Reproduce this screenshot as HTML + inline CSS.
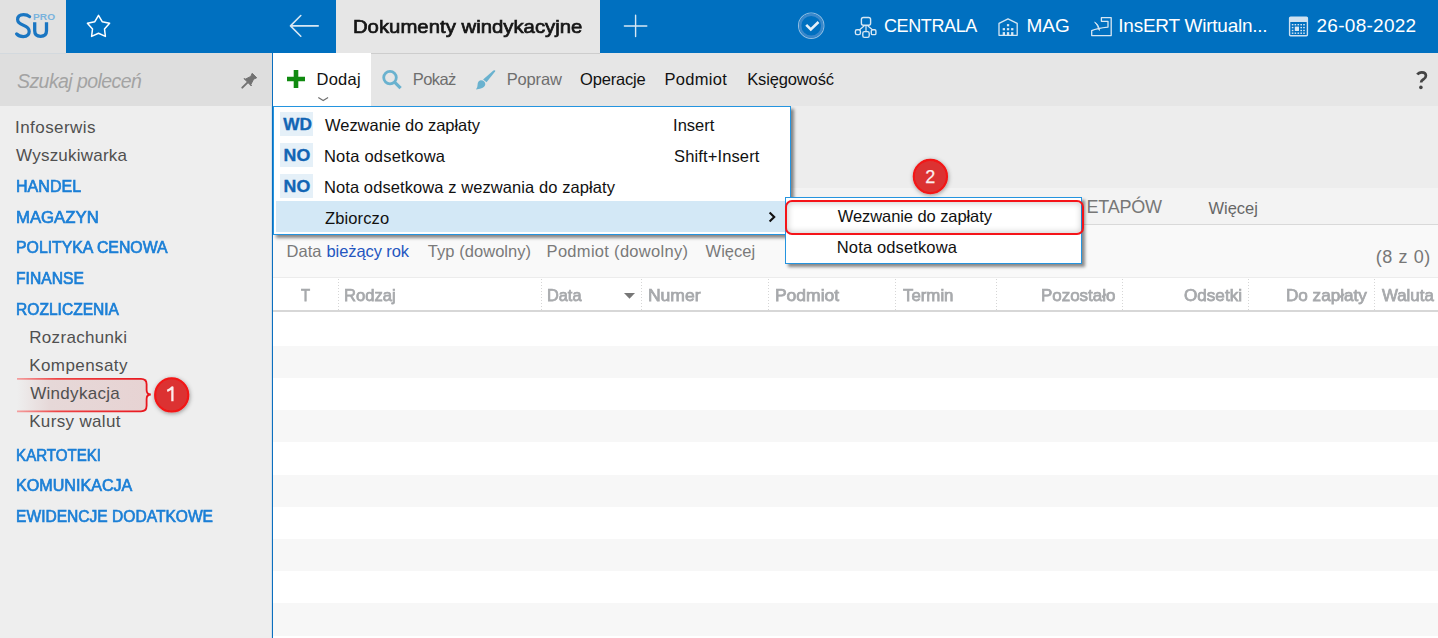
<!DOCTYPE html>
<html><head><meta charset="utf-8">
<style>
*{box-sizing:border-box;margin:0;padding:0}
html,body{width:1438px;height:638px;overflow:hidden;background:#fff;font-family:"Liberation Sans",sans-serif;position:relative}
.a{position:absolute}
.t{position:absolute;white-space:pre;line-height:1}
svg{position:absolute;overflow:visible}
</style></head><body>
<!-- ===== TOP BAR ===== -->
<div class="a" style="left:0;top:0;width:66px;height:53px;background:#e1e1e1"></div>
<div class="a" style="left:66px;top:0;width:270px;height:53px;background:#0070c0"></div>
<div class="a" style="left:336px;top:0;width:264px;height:53px;background:#e6e6e6"></div>
<div class="a" style="left:600px;top:0;width:838px;height:53px;background:#0070c0"></div>

<!-- logo -->
<svg style="left:0;top:0" width="66" height="53">
  <path d="M29.6 16.6 Q27.4 14.6 23.6 14.6 Q17.6 14.6 17.6 19.6 Q17.6 23.3 23.4 25.3 Q29.2 27.3 29.2 31.6 Q29.2 36.6 23.2 36.6 Q19 36.6 16.6 33.9" fill="none" stroke="#1a76c2" stroke-width="3.2" stroke-linecap="round"/>
  <path d="M34.7 22.2 V30.8 Q34.7 36.3 40.6 36.3 Q46.5 36.3 46.5 30.8 V22.2" fill="none" stroke="#1a76c2" stroke-width="3.3"/>
  <text x="33.1" y="19.8" font-family="Liberation Sans" font-size="9.4" font-weight="700" fill="#7ab3dd" textLength="22" lengthAdjust="spacingAndGlyphs">PRO</text>
</svg>

<!-- star -->
<svg style="left:0;top:0" width="140" height="53">
  <path d="M98.5 15.3 L102.2 21.7 L109.6 23.3 L104.5 29 L105.4 36.4 L98.5 33.3 L91.6 36.4 L92.5 29 L87.4 23.3 L94.8 21.7 Z" fill="none" stroke="#fff" stroke-width="1.5" stroke-linejoin="round"/>
</svg>
<!-- back arrow -->
<svg style="left:0;top:0" width="336" height="53">
  <path d="M300.8 15.5 L290.5 25.9 L300.8 36.2 M290.5 25.9 H318.2" fill="none" stroke="#d7e7f3" stroke-width="1.6" stroke-linecap="round" stroke-linejoin="round"/>
</svg>
<!-- plus -->
<svg style="left:0;top:0" width="700" height="53">
  <path d="M635.6 15.2 V36.6 M624.4 26 H646.8" fill="none" stroke="#d7e7f3" stroke-width="1.4" stroke-linecap="round"/>
</svg>
<!-- status check -->
<svg style="left:0;top:0" width="900" height="53">
  <circle cx="811.2" cy="25.7" r="12.7" fill="none" stroke="#8fbde2" stroke-width="1.1"/>
  <circle cx="811.2" cy="25.7" r="11" fill="none" stroke="#3a88cb" stroke-width="2.4"/>
  <path d="M806.2 24.8 L810.8 29.4 L818.5 22" fill="none" stroke="#e4eff8" stroke-width="2.6"/>
  <!-- org icon -->
  <rect x="861.4" y="17.5" width="9.2" height="7.8" rx="2" fill="none" stroke="#d7e7f3" stroke-width="1.4"/>
  <path d="M866 25.3 V31.2 M864.3 25.8 L859.3 30 M867.7 25.8 L872.7 30" fill="none" stroke="#d7e7f3" stroke-width="1.2"/>
  <rect x="862.8" y="31.6" width="6.4" height="5.8" rx="1.6" fill="none" stroke="#d7e7f3" stroke-width="1.4"/>
  <rect x="855.4" y="29.8" width="5" height="4.8" rx="1.6" fill="none" stroke="#d7e7f3" stroke-width="1.4"/>
  <rect x="871.3" y="29.8" width="4.6" height="4.8" rx="1.2" fill="none" stroke="#d7e7f3" stroke-width="1.4"/>
</svg>
<!-- building icon -->
<svg style="left:0;top:0" width="1100" height="53">
  <path d="M999 35.3 V23.4 L1008 18.8 L1017.2 23.4 V35.3 Z" fill="none" stroke="#d7e7f3" stroke-width="1.3" stroke-linejoin="round"/>
  <g fill="#d7e7f3">
    <rect x="1006.9" y="24.1" width="2.3" height="2.2"/>
    <rect x="1002.7" y="28.1" width="2.3" height="2.2"/><rect x="1006.9" y="28.1" width="2.3" height="2.2"/><rect x="1011.1" y="28.1" width="2.3" height="2.2"/>
    <rect x="1002.7" y="32.1" width="2.3" height="3"/><rect x="1006.9" y="32.1" width="2.3" height="3"/><rect x="1011.1" y="32.1" width="2.3" height="3"/>
  </g>
  <!-- insert icon -->
  <path d="M1101.4 21.3 V17.7 H1111.2 V35.6 H1091.7 V30.6 Q1097 28.2 1108 27.1 V21.3 Z" fill="none" stroke="#d7e7f3" stroke-width="1.3" stroke-linejoin="round"/>
  <path d="M1094.6 22.3 Q1098.6 23.6 1099.4 30.4 Q1098 27.8 1097.6 26.2 Q1096.4 23.6 1094.6 22.3 Z" fill="#d7e7f3" stroke="#d7e7f3" stroke-width="0.9" stroke-linejoin="round"/>
</svg>
<!-- calendar icon -->
<svg style="left:0;top:0" width="1438" height="53">
  <rect x="1289.6" y="17.2" width="17.8" height="18.6" rx="1" fill="none" stroke="#cfe2f1" stroke-width="1.4"/>
  <rect x="1289.6" y="17.2" width="17.8" height="4.8" fill="#cfe2f1"/>
  <g fill="#d7e7f3">
    <rect x="1291.8" y="24" width="1.6" height="1.4"/><rect x="1294.6" y="24" width="1.6" height="1.4"/><rect x="1297.5" y="24" width="1.6" height="1.4"/><rect x="1300.4" y="24" width="1.6" height="1.4"/><rect x="1303.2" y="24" width="1.6" height="1.4"/>
    <rect x="1291.8" y="26.9" width="1.6" height="1.4"/><rect x="1300.4" y="26.9" width="1.6" height="1.4"/><rect x="1303.2" y="26.9" width="1.6" height="1.4"/>
    <rect x="1291.8" y="29.8" width="1.6" height="1.4"/><rect x="1300.4" y="29.8" width="1.6" height="1.4"/><rect x="1303.2" y="29.8" width="1.6" height="1.4"/>
    <rect x="1291.8" y="32.5" width="1.6" height="1.4"/><rect x="1294.6" y="32.5" width="1.6" height="1.4"/><rect x="1297.5" y="32.5" width="1.6" height="1.4"/><rect x="1300.4" y="32.5" width="1.6" height="1.4"/><rect x="1303.2" y="32.5" width="1.6" height="1.4"/>
    <rect x="1294.8" y="26.6" width="4.2" height="4.4"/>
  </g>
</svg>

<!-- ===== SECOND ROW ===== -->
<div class="a" style="left:0;top:53px;width:272px;height:53px;background:#dedede"></div>
<div class="a" style="left:0;top:53px;width:66px;height:1px;background:#d3d9de"></div>
<div class="a" style="left:273px;top:53px;width:1165px;height:53px;background:#e6e6e6"></div>
<div class="a" style="left:336px;top:53px;width:264px;height:1px;background:#cdcdcd"></div>
<div class="a" style="left:273px;top:53px;width:98px;height:53px;background:#fff"></div>
<!-- pin -->
<svg style="left:0;top:0" width="272" height="105">
  <path d="M252.2 73.3 L256.7 77.8 L253.6 79.2 L250.9 84.4 L251.4 86 L244 78.6 L245.6 79.1 L250.8 76.4 Z" fill="#727272" stroke="#727272" stroke-width="1" stroke-linejoin="round"/>
  <path d="M247.4 82.6 L242.3 87.6" stroke="#727272" stroke-width="2" stroke-linecap="round"/>
</svg>
<!-- toolbar icons -->
<svg style="left:0;top:0" width="1438" height="105">
  <path d="M296 70 V88 M287 79 H305" stroke="#108a10" stroke-width="4.6"/>
  <path d="M318.3 97.6 L323.2 100.5 L328.1 97.6" fill="none" stroke="#707070" stroke-width="1.2"/>
  <circle cx="390" cy="77.6" r="6.3" fill="none" stroke="#6ab2cf" stroke-width="2.8"/>
  <path d="M394.8 82.4 L400.6 88.2" stroke="#6ab2cf" stroke-width="3.2" stroke-linecap="butt"/>
  <path d="M483.1 79.5 L493.4 70.6 Q495.8 69.4 495.1 71.6 L486.5 82.3 Z" fill="#6ab2cf"/>
  <path d="M480.8 80.2 Q485.3 80.5 485.3 84.3 Q485 87.7 480 88.7 L476 89.6 Q477.7 87.8 477.6 84.6 Q477.6 80.8 480.8 80.2 Z" fill="#6ab2cf"/>
  <path d="M1417.3 74.6 Q1418.8 72.3 1421.8 72.3 Q1425.9 72.3 1425.9 75.7 Q1425.9 77.9 1423.5 79.3 Q1421.1 80.6 1421.1 82.6" fill="none" stroke="#444" stroke-width="2.7" stroke-linecap="butt"/>
  <circle cx="1420.9" cy="87.4" r="1.8" fill="#444"/>
</svg>

<!-- ===== SIDEBAR ===== -->
<div class="a" style="left:0;top:106px;width:272px;height:532px;background:#eeeeee"></div>
<div class="a" style="left:271px;top:106px;width:1px;height:532px;background:#d3dfea"></div>
<div class="a" style="left:272px;top:53px;width:1px;height:585px;background:#0b6fbf"></div>

<!-- ===== MAIN ===== -->
<div class="a" style="left:273px;top:106px;width:1165px;height:82px;background:#ededed"></div>
<div class="a" style="left:273px;top:188px;width:1165px;height:37px;background:#f3f3f3;border-bottom:1px solid #d9d9d9"></div>
<div class="a" style="left:273px;top:225px;width:1165px;height:52px;background:#f9f9f9"></div>
<div class="a" style="left:273px;top:277px;width:1165px;height:35px;background:#fff;border-top:1px solid #ececec;border-bottom:2px solid #d7d7d7"></div>
<!-- col separators -->
<svg style="left:0;top:0" width="1438" height="320">
  <g stroke="#d6d6d6" stroke-width="1" stroke-dasharray="1 2">
    <path d="M338.5 279 V310 M541.5 279 V310 M641.5 279 V310 M768.5 279 V310 M895.5 279 V310 M996.5 279 V310 M1122.5 279 V310 M1248.5 279 V310 M1374.5 279 V310"/>
  </g>
  <path d="M624 293 H635 L629.5 298.8 Z" fill="#777"/>
</svg>
<!-- rows -->
<div class="a" style="left:273px;top:346px;width:1165px;height:32px;background:#f7f7f7"></div>
<div class="a" style="left:273px;top:410px;width:1165px;height:32px;background:#f7f7f7"></div>
<div class="a" style="left:273px;top:475px;width:1165px;height:32px;background:#f7f7f7"></div>
<div class="a" style="left:273px;top:539px;width:1165px;height:32px;background:#f7f7f7"></div>
<div class="a" style="left:273px;top:603px;width:1165px;height:33px;background:#f7f7f7"></div>

<!-- ===== ANNOTATION 1 ===== -->
<svg style="left:0;top:0" width="272" height="638">
  <defs>
    <linearGradient id="hl1" x1="0" x2="1" y1="0" y2="0">
      <stop offset="0" stop-color="#eeeeee"/>
      <stop offset="0.25" stop-color="#e6d8d8"/>
      <stop offset="1" stop-color="#e7d3d3"/>
    </linearGradient>
    <linearGradient id="ln1" x1="0" x2="1" y1="0" y2="0">
      <stop offset="0" stop-color="#f3a0a0"/>
      <stop offset="0.3" stop-color="#ee4444"/>
      <stop offset="1" stop-color="#e8141c"/>
    </linearGradient>
    <filter id="sh" x="-50%" y="-50%" width="200%" height="200%">
      <feDropShadow dx="0.5" dy="1.2" stdDeviation="2.2" flood-color="#000" flood-opacity="0.38"/>
    </filter>
  </defs>
  <rect x="17" y="379" width="130" height="32" fill="url(#hl1)"/>
  <path d="M17 378.8 H141 Q146.6 378.8 146.6 384.3 V390 Q146.6 394.5 150.8 394.5 Q146.6 394.5 146.6 399 V405.8 Q146.6 411.3 141 411.3 H17" fill="none" stroke="url(#ln1)" stroke-width="1.8"/>
  <g filter="url(#sh)">
    <circle cx="171.7" cy="394.9" r="16.6" fill="#dc3333" stroke="#f31414" stroke-width="2.1"/>
  </g>
  <path d="M172.4 401.2 V387.3 Q170.6 389.6 167.2 390.8" fill="none" stroke="#fbeeee" stroke-width="2.3" stroke-linejoin="round"/>
</svg>

<!-- ===== MENU ===== -->
<div class="a" style="left:273px;top:106px;width:518px;height:129px;background:#fff;border:1px solid #2494df;box-shadow:3px 3px 3px rgba(0,0,0,0.45)"></div>
<div class="a" style="left:276px;top:201px;width:510px;height:31px;background:#d3e8f6"></div>
<div class="a" style="left:280px;top:112px;width:33px;height:24px;background:#e5f0f8"></div>
<div class="a" style="left:280px;top:143px;width:33px;height:24px;background:#e5f0f8"></div>
<div class="a" style="left:280px;top:173.5px;width:33px;height:24px;background:#e5f0f8"></div>
<svg style="left:0;top:0" width="800" height="240">
  <text x="283.3" y="130.2" font-family="Liberation Sans" font-size="16" font-weight="700" fill="#1265b4" stroke="#1265b4" stroke-width="0.35" textLength="28.7" lengthAdjust="spacingAndGlyphs">WD</text>
  <text x="283.6" y="161" font-family="Liberation Sans" font-size="16" font-weight="700" fill="#1265b4" stroke="#1265b4" stroke-width="0.35" textLength="26.6" lengthAdjust="spacingAndGlyphs">NO</text>
  <text x="283.6" y="191.8" font-family="Liberation Sans" font-size="16" font-weight="700" fill="#1265b4" stroke="#1265b4" stroke-width="0.35" textLength="26.6" lengthAdjust="spacingAndGlyphs">NO</text>
  <path d="M769.6 212.6 L774.2 217 L769.6 221.4" fill="none" stroke="#111" stroke-width="2.1"/>
</svg>

<!-- ===== SUBMENU ===== -->
<div class="a" style="left:785px;top:197px;width:297px;height:67px;background:#fff;border:1px solid #2494df;box-shadow:3px 3px 3px rgba(0,0,0,0.45)"></div>
<div class="a" style="left:785px;top:199.5px;width:298.5px;height:35px;border:2px solid #f51419;border-radius:7px;box-shadow:inset 0 0 6px 1px rgba(0,0,0,0.2)"></div>

<!-- ===== BADGE 2 ===== -->
<svg style="left:0;top:0" width="1000" height="240">
  <g filter="url(#sh)">
    <circle cx="930.4" cy="176.5" r="16.6" fill="#dc3333" stroke="#f31414" stroke-width="2.1"/>
  </g>
  <text x="930.2" y="183" text-anchor="middle" font-family="Liberation Sans" font-size="18" fill="#fbeeee" stroke="#fbeeee" stroke-width="0.25">2</text>
</svg>

<span class="t" style="left:352.60px;top:17.05px;font-size:19px;color:#151515;transform:scaleX(1.0705);transform-origin:1.00px 0;-webkit-text-stroke:0.7px #151515">Dokumenty windykacyjne</span>
<span class="t" style="left:884.00px;top:17.00px;font-size:18px;color:#fff;letter-spacing:-0.388px">CENTRALA</span>
<span class="t" style="left:1026.40px;top:16.15px;font-size:19px;color:#fff;letter-spacing:0.050px">MAG</span>
<span class="t" style="left:1118.30px;top:16.15px;font-size:19px;color:#fff;letter-spacing:-0.242px">InsERT Wirtualn...</span>
<span class="t" style="left:1316.50px;top:16.15px;font-size:19px;color:#fff;letter-spacing:0.275px">26-08-2022</span>
<span class="t" style="left:17.00px;top:71.62px;font-size:19.5px;color:#a3a3a3;font-style:italic;letter-spacing:-0.570px">Szukaj poleceń</span>
<span class="t" style="left:316.50px;top:70.77px;font-size:16.5px;color:#111;letter-spacing:0.264px">Dodaj</span>
<span class="t" style="left:412.80px;top:70.77px;font-size:16.5px;color:#6e6e6e;letter-spacing:-0.602px">Pokaż</span>
<span class="t" style="left:506.70px;top:70.77px;font-size:16.5px;color:#6e6e6e;letter-spacing:-0.146px">Popraw</span>
<span class="t" style="left:580.10px;top:70.77px;font-size:16.5px;color:#111;letter-spacing:-0.196px">Operacje</span>
<span class="t" style="left:664.40px;top:70.77px;font-size:16.5px;color:#111;letter-spacing:0.326px">Podmiot</span>
<span class="t" style="left:747.20px;top:70.77px;font-size:16.5px;color:#111;letter-spacing:-0.133px">Księgowość</span>
<span class="t" style="left:15.10px;top:118.55px;font-size:17px;color:#505050;letter-spacing:0.419px">Infoserwis</span>
<span class="t" style="left:16.10px;top:147.15px;font-size:17px;color:#505050;letter-spacing:0.216px">Wyszukiwarka</span>
<span class="t" style="left:15.60px;top:178.17px;font-size:16.5px;color:#1b7fd6;transform:scaleX(0.9717);transform-origin:1.00px 0;-webkit-text-stroke:0.7px #1b7fd6">HANDEL</span>
<span class="t" style="left:15.60px;top:208.78px;font-size:16.5px;color:#1b7fd6;transform:scaleX(1.0141);transform-origin:1.00px 0;-webkit-text-stroke:0.7px #1b7fd6">MAGAZYN</span>
<span class="t" style="left:15.60px;top:239.38px;font-size:16.5px;color:#1b7fd6;transform:scaleX(0.9588);transform-origin:1.00px 0;-webkit-text-stroke:0.7px #1b7fd6">POLITYKA CENOWA</span>
<span class="t" style="left:15.60px;top:269.98px;font-size:16.5px;color:#1b7fd6;transform:scaleX(0.9474);transform-origin:1.00px 0;-webkit-text-stroke:0.7px #1b7fd6">FINANSE</span>
<span class="t" style="left:15.60px;top:300.58px;font-size:16.5px;color:#1b7fd6;transform:scaleX(0.9437);transform-origin:1.00px 0;-webkit-text-stroke:0.7px #1b7fd6">ROZLICZENIA</span>
<span class="t" style="left:15.60px;top:446.78px;font-size:16.5px;color:#1b7fd6;transform:scaleX(0.9142);transform-origin:1.00px 0;-webkit-text-stroke:0.7px #1b7fd6">KARTOTEKI</span>
<span class="t" style="left:15.60px;top:476.88px;font-size:16.5px;color:#1b7fd6;transform:scaleX(0.9757);transform-origin:1.00px 0;-webkit-text-stroke:0.7px #1b7fd6">KOMUNIKACJA</span>
<span class="t" style="left:15.60px;top:507.77px;font-size:16.5px;color:#1b7fd6;transform:scaleX(0.9437);transform-origin:1.00px 0;-webkit-text-stroke:0.7px #1b7fd6">EWIDENCJE DODATKOWE</span>
<span class="t" style="left:29.20px;top:329.15px;font-size:17px;color:#505050;letter-spacing:0.329px">Rozrachunki</span>
<span class="t" style="left:29.20px;top:357.35px;font-size:17px;color:#505050;letter-spacing:0.423px">Kompensaty</span>
<span class="t" style="left:30.20px;top:385.15px;font-size:17px;color:#505050;letter-spacing:0.293px">Windykacja</span>
<span class="t" style="left:29.20px;top:413.25px;font-size:17px;color:#505050;letter-spacing:0.346px">Kursy walut</span>
<span class="t" style="left:325.00px;top:117.07px;font-size:16.5px;color:#111;letter-spacing:-0.031px">Wezwanie do zapłaty</span>
<span class="t" style="left:324.00px;top:147.78px;font-size:16.5px;color:#111;letter-spacing:0.204px">Nota odsetkowa</span>
<span class="t" style="left:324.00px;top:178.78px;font-size:16.5px;color:#111;letter-spacing:0.087px">Nota odsetkowa z wezwania do zapłaty</span>
<span class="t" style="left:325.00px;top:209.97px;font-size:16.5px;color:#111;letter-spacing:0.115px">Zbiorczo</span>
<span class="t" style="left:673.10px;top:116.88px;font-size:16.5px;color:#111;letter-spacing:-0.016px">Insert</span>
<span class="t" style="left:674.10px;top:147.57px;font-size:16.5px;color:#111;letter-spacing:0.124px">Shift+Insert</span>
<span class="t" style="left:837.80px;top:207.88px;font-size:16.5px;color:#111;letter-spacing:-0.081px">Wezwanie do zapłaty</span>
<span class="t" style="left:836.80px;top:238.57px;font-size:16.5px;color:#111;letter-spacing:0.135px">Nota odsetkowa</span>
<span class="t" style="left:1086.60px;top:198.30px;font-size:18px;color:#777;letter-spacing:-0.256px">ETAPÓW</span>
<span class="t" style="left:1208.50px;top:199.57px;font-size:16.5px;color:#666;letter-spacing:-0.028px">Więcej</span>
<span class="t" style="left:286.60px;top:243.28px;font-size:16.5px;color:#7a7a7a">Data</span>
<span class="t" style="left:326.50px;top:243.28px;font-size:16.5px;color:#2456c0;letter-spacing:-0.090px">bieżący rok</span>
<span class="t" style="left:427.80px;top:243.28px;font-size:16.5px;color:#7a7a7a;letter-spacing:0.049px">Typ (dowolny)</span>
<span class="t" style="left:546.60px;top:243.28px;font-size:16.5px;color:#7a7a7a;letter-spacing:0.297px">Podmiot (dowolny)</span>
<span class="t" style="left:705.60px;top:243.28px;font-size:16.5px;color:#7a7a7a;letter-spacing:-0.008px">Więcej</span>
<span class="t" style="left:1375.80px;top:247.50px;font-size:18px;color:#777;letter-spacing:0.580px">(8 z 0)</span>
<span class="t" style="left:301.00px;top:287.48px;font-size:16.5px;color:#a7a9ac;transform:scaleX(0.9000);transform-origin:0.00px 0;-webkit-text-stroke:0.75px #a7a9ac">T</span>
<span class="t" style="left:344.00px;top:287.48px;font-size:16.5px;color:#a7a9ac;transform:scaleX(1.0061);transform-origin:1.00px 0;-webkit-text-stroke:0.75px #a7a9ac">Rodzaj</span>
<span class="t" style="left:547.30px;top:287.48px;font-size:16.5px;color:#a7a9ac;transform:scaleX(0.9891);transform-origin:1.00px 0;-webkit-text-stroke:0.75px #a7a9ac">Data</span>
<span class="t" style="left:647.80px;top:287.48px;font-size:16.5px;color:#a7a9ac;transform:scaleX(1.0630);transform-origin:1.00px 0;-webkit-text-stroke:0.75px #a7a9ac">Numer</span>
<span class="t" style="left:775.40px;top:287.48px;font-size:16.5px;color:#a7a9ac;transform:scaleX(1.0610);transform-origin:1.00px 0;-webkit-text-stroke:0.75px #a7a9ac">Podmiot</span>
<span class="t" style="left:902.70px;top:287.48px;font-size:16.5px;color:#a7a9ac;transform:scaleX(1.0196);transform-origin:0.00px 0;-webkit-text-stroke:0.75px #a7a9ac">Termin</span>
<span class="t" style="left:1041.20px;top:287.48px;font-size:16.5px;color:#a7a9ac;transform:scaleX(1.0269);transform-origin:1.00px 0;-webkit-text-stroke:0.75px #a7a9ac">Pozostało</span>
<span class="t" style="left:1183.60px;top:287.48px;font-size:16.5px;color:#a7a9ac;transform:scaleX(1.0367);transform-origin:0.00px 0;-webkit-text-stroke:0.75px #a7a9ac">Odsetki</span>
<span class="t" style="left:1286.40px;top:287.48px;font-size:16.5px;color:#a7a9ac;transform:scaleX(1.0372);transform-origin:1.00px 0;-webkit-text-stroke:0.75px #a7a9ac">Do zapłaty</span>
<span class="t" style="left:1382.00px;top:287.48px;font-size:16.5px;color:#a7a9ac;transform:scaleX(1.0201);transform-origin:0.00px 0;-webkit-text-stroke:0.75px #a7a9ac">Waluta</span>
</body></html>
